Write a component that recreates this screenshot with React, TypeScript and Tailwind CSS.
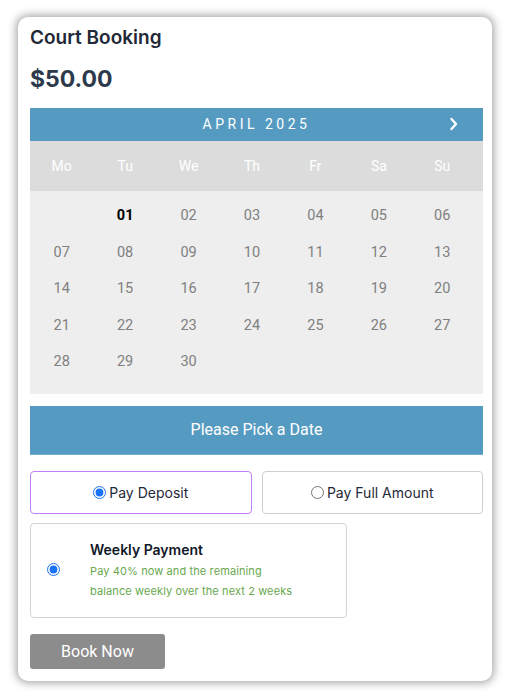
import React from 'react';

const dayNames = ['Mo', 'Tu', 'We', 'Th', 'Fr', 'Sa', 'Su'];
const days: (string | null)[] = [
  null, '01', '02', '03', '04', '05', '06',
  '07', '08', '09', '10', '11', '12', '13',
  '14', '15', '16', '17', '18', '19', '20',
  '21', '22', '23', '24', '25', '26', '27',
  '28', '29', '30', null, null, null, null,
];

export default function App() {
  return (
    <div className="w-[510px] h-[699px] bg-white pt-[17px] pl-[18px] font-['Inter','Liberation_Sans',sans-serif]">
      <div className="w-[474px] h-[664px] rounded-[10px] bg-white shadow-[0_0_8px_2px_rgba(0,0,0,0.35)] pl-3 pr-[9px] pt-[9px]">
        {/* Title */}
        <h1 className="text-[19px] leading-[24px] font-semibold text-[#1f2937]">Court Booking</h1>
        <div className="mt-[14px] text-[23px] leading-[30px] font-bold text-[#2d3a4b]">$50.00</div>

        {/* Calendar */}
        <div className="mt-[14px] font-['Roboto','Liberation_Sans',sans-serif]">
          <div className="relative h-[33px] bg-[#559bc1] flex items-center justify-center text-white text-[14px] tracking-[0.25em]">
            APRIL 2025
            <span className="absolute right-[24px] top-[6px] leading-[20px]">
              <svg width="10" height="14" viewBox="0 0 10 14" className="mt-[3px]">
                <path d="M2.5 2 L7 7 L2.5 12" stroke="white" strokeWidth="2.4" fill="none" strokeLinecap="round" strokeLinejoin="round" />
              </svg>
            </span>
          </div>
          <div className="h-[50px] bg-[#dcdcdc] grid grid-cols-7 pr-[9px] items-center text-white text-[14px]">
            {dayNames.map(d => (
              <span key={d} className="text-center">{d}</span>
            ))}
          </div>
          <div className="h-[203px] bg-[#eeeeee] grid grid-cols-7 pr-[9px] pt-[7px] auto-rows-[36.5px] items-center text-[14.5px] text-[#808080]">
            {days.map((d, i) => (
              <span key={i} className={d === '01' ? 'text-center font-bold text-black' : 'text-center'}>{d ?? ''}</span>
            ))}
          </div>
        </div>

        {/* Pick a date */}
        <button className="mt-[12px] w-full h-[49px] bg-[#559bc1] border-b border-[#6fb0d4] text-white text-[16px] font-['Roboto','Liberation_Sans',sans-serif]">
          Please Pick a Date
        </button>

        {/* Pay options */}
        <div className="mt-[16px] flex gap-[10px]">
          <label className="flex-1 h-[43px] rounded-[4px] border-[1.5px] border-[#c27df7] flex items-center justify-center gap-[3px] text-[14px] text-[#1f2937]">
            <input type="radio" name="pay" defaultChecked className="w-[13px] h-[13px] m-0 accent-[#1a73f8]" />
            Pay Deposit
          </label>
          <label className="flex-1 h-[43px] rounded-[4px] border border-[#cfcfcf] flex items-center justify-center gap-[3px] text-[14px] text-[#1f2937]">
            <input type="radio" name="pay" className="w-[13px] h-[13px] m-0" />
            Pay Full Amount
          </label>
        </div>

        {/* Weekly payment */}
        <div className="mt-[9px] w-[317px] h-[95px] rounded-[4px] border border-[#d4d4d4] flex items-center pl-[16px]">
          <input type="radio" defaultChecked className="w-[13px] h-[13px] m-0 -mt-[2px] accent-[#1a73f8]" />
          <div className="ml-[30px]">
            <div className="text-[14px] leading-[18px] font-semibold text-[#111827]">Weekly Payment</div>
            <div className="mt-[2px] text-[11px] leading-[20px] tracking-[0.01em] text-[#6aa84f]">
              Pay 40% now and the remaining
              <br />
              balance weekly over the next 2 weeks
            </div>
          </div>
        </div>

        {/* Book */}
        <button className="mt-[16px] w-[135px] h-[35px] rounded-[3px] bg-[#8c8c8c] text-white text-[16px] font-['Roboto','Liberation_Sans',sans-serif]">
          Book Now
        </button>
      </div>
    </div>
  );
}
